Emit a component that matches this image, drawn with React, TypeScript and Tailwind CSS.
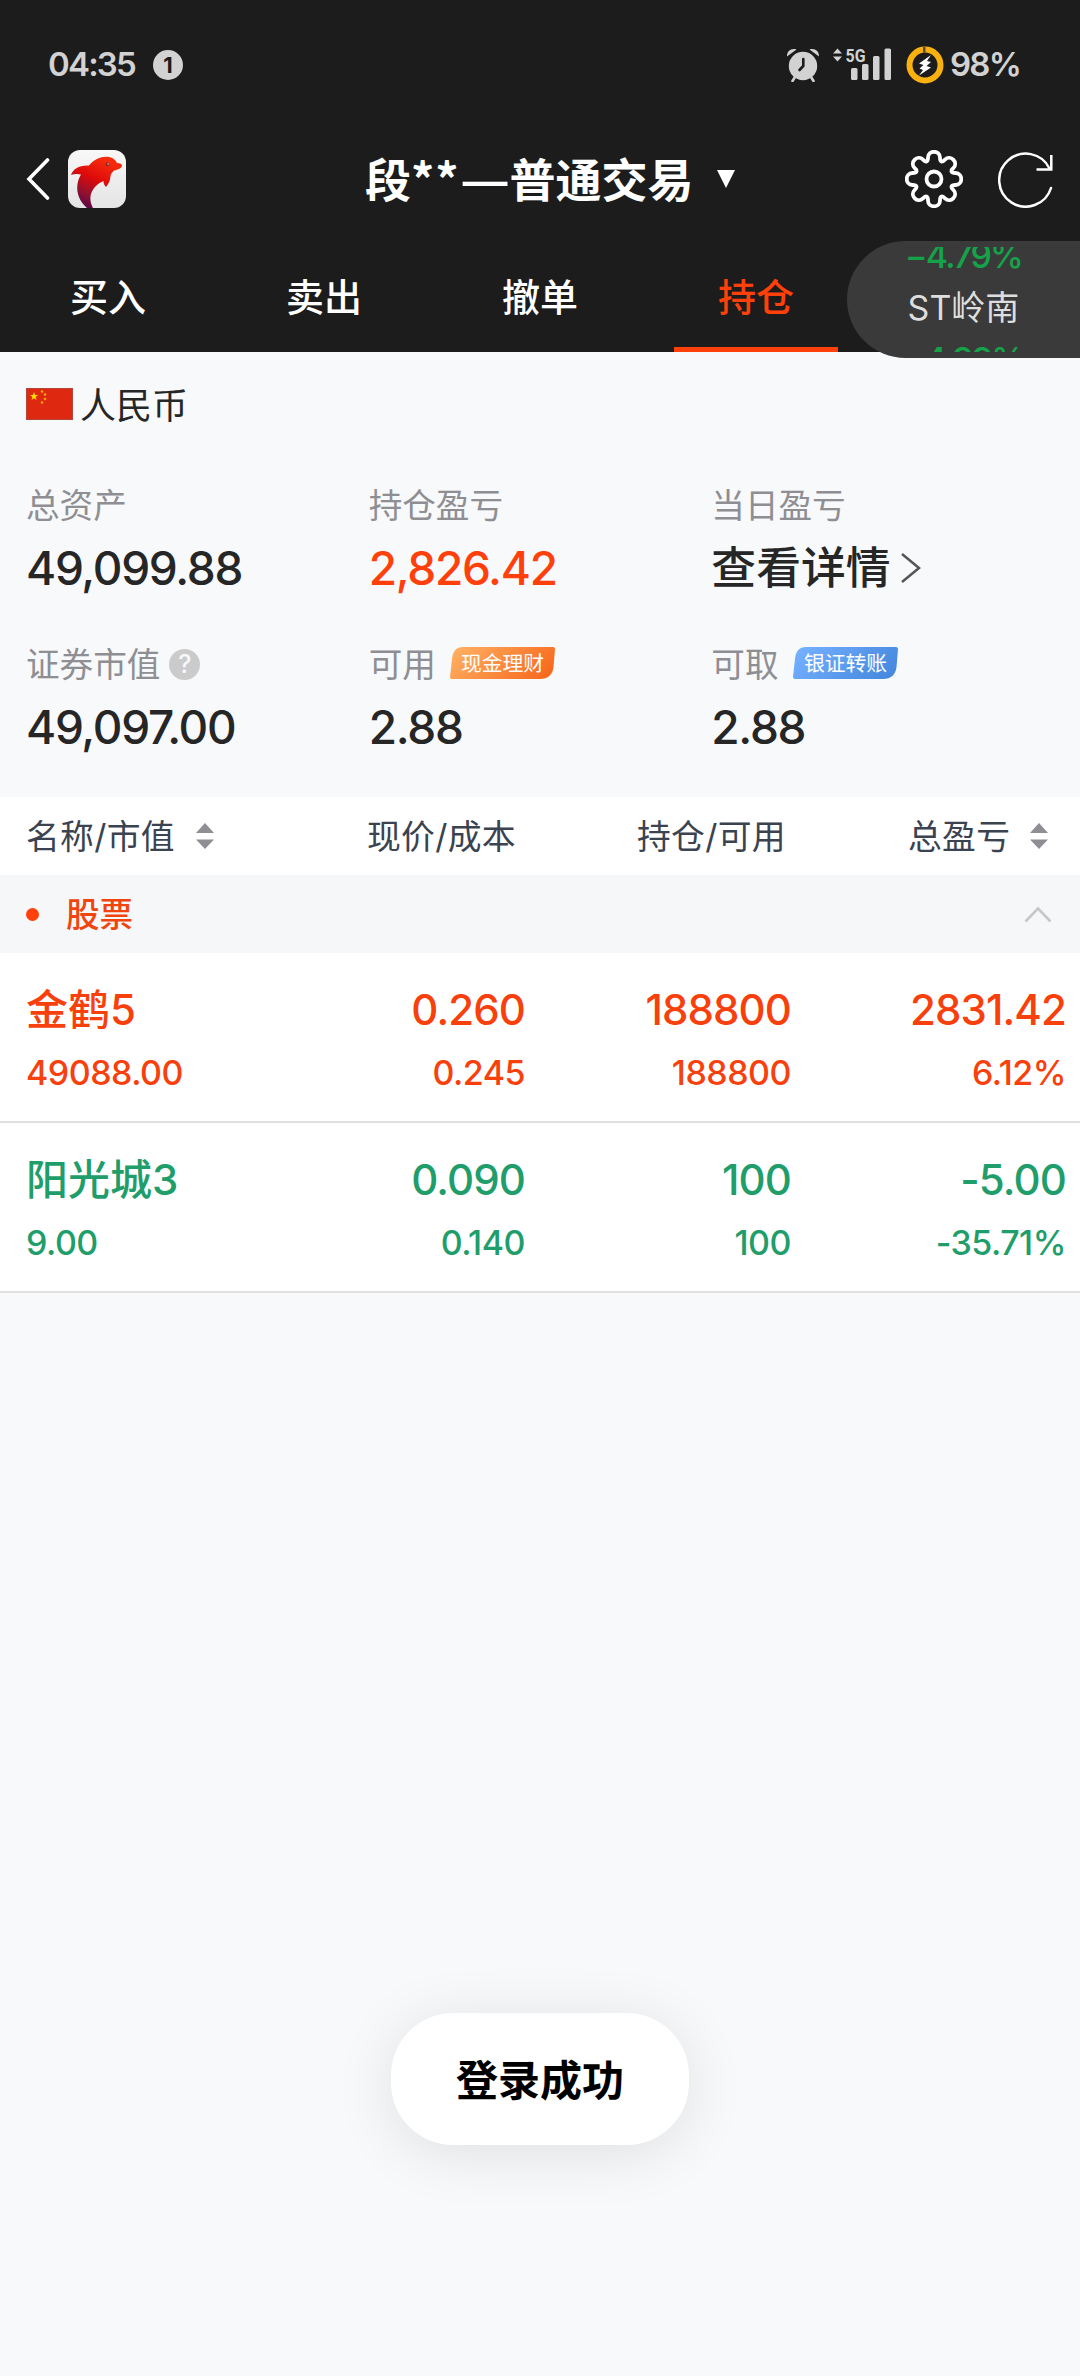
import React, { FC, ReactNode } from 'react';

type Tone = 'up' | 'down';

interface Holding {
    name: string;
    marketValue: string;
    price: string;
    cost: string;
    amount: string;
    available: string;
    profit: string;
    percent: string;
    tone: Tone;
}

const tabs = ['买入', '卖出', '撤单', '持仓'];

const holdings: Holding[] = [
    { name: '金鹤5', marketValue: '49088.00', price: '0.260', cost: '0.245', amount: '188800', available: '188800', profit: '2831.42', percent: '6.12%', tone: 'up' },
    { name: '阳光城3', marketValue: '9.00', price: '0.090', cost: '0.140', amount: '100', available: '100', profit: '-5.00', percent: '-35.71%', tone: 'down' },
];

const AlarmIcon: FC = () => (
    <svg width="32" height="34" viewBox="0 0 32 34" fill="#d2d2d2">
        <circle cx="16" cy="18" r="14.2" />
        <path d="M0 8.500 C0 3 4 0 9.500 1.500 Z M32 8.500 C32 3 28 0 22.500 1.500 Z" />
        <path d="M8 29 L5.500 33 M24 29 L26.500 33" stroke="#d2d2d2" strokeWidth="2.600" strokeLinecap="round" />
        <path d="M16.300 11 V18 L12.500 22" stroke="#1c1c1c" strokeWidth="2.600" strokeLinecap="round" fill="none" />
    </svg>
);

const SignalIcon: FC = () => (
    <svg width="60" height="34" viewBox="0 0 60 34" fill="#d2d2d2">
        <path d="M1 5.500 L5.500 0.500 L10 5.500 Z M1 8.500 L5.500 13.500 L10 8.500 Z" />
        <text x="13.500" y="14" fontSize="18" fontWeight="700" fontFamily="Roboto, sans-serif" textLength="20" lengthAdjust="spacingAndGlyphs">5G</text>
        <rect x="19" y="20" width="6.500" height="12" rx="1.500" />
        <rect x="30" y="16" width="6.500" height="16" rx="1.500" />
        <rect x="41" y="8" width="6.500" height="24" rx="1.500" />
        <rect x="52.500" y="0.500" width="6.500" height="31.500" rx="1.500" />
    </svg>
);

const BatteryIcon: FC = () => (
    <svg width="38" height="38" viewBox="0 0 38 38">
        <circle cx="19" cy="19" r="15.500" fill="none" stroke="#f9b10f" strokeWidth="6" />
        <rect x="17" y="1" width="2.500" height="5.500" fill="#5a4a25" />
        <path d="M25 9 L13 17.500 L17.500 19 L13.500 22.500 L17 24 L13 29.500 L25 21.500 L20.500 20 L25 16 L21 15 Z" fill="#fff" />
    </svg>
);

const DolphinLogo: FC = () => (
    <svg width="58" height="58" viewBox="0 0 58 58">
        <defs>
            <linearGradient id="tile" x1="0" y1="0" x2="0" y2="1">
                <stop offset="0" stopColor="#f8f8f8" />
                <stop offset="1" stopColor="#e4e4e4" />
            </linearGradient>
            <linearGradient id="dolphin" x1="0.7" y1="0.1" x2="0.25" y2="1">
                <stop offset="0" stopColor="#f52a0c" />
                <stop offset="0.4" stopColor="#dd0a0a" />
                <stop offset="0.7" stopColor="#98102c" />
                <stop offset="1" stopColor="#56084c" />
            </linearGradient>
        </defs>
        <rect width="58" height="58" rx="12" fill="url(#tile)" />
        <path d="M3 25 C5 19 11 15 21 15.500 C26 9 34 6 41 7 C46 8 48 11 49 13 C52 13 54 14 54 15.500 C54 18 50 20 46 20.500 C44 22.500 43 24 42.500 26 C42.500 30 40.500 34 38 37 C36 35 35.500 33 35.500 31 C30 33 25 38 23 44 C21.500 49 23 54 25 58 L19 58 C12 52 8 43 9.500 34 C10 30 11.500 27 13 24.500 C9 23.500 6 24 3 25 Z" fill="url(#dolphin)" />
        <circle cx="39.500" cy="14.500" r="1.900" fill="#8f2b22" />
        <circle cx="40.200" cy="14" r="0.800" fill="#e8b0a0" />
    </svg>
);

// eight-lobed gear, alternating outer bumps and inner notches
const GearIcon: FC = () => (
    <svg width="58" height="58" viewBox="-29 -29 58 58" fill="none" stroke="#fff" strokeWidth="3.800" strokeLinejoin="round">
        <path d="M-6 -21.500 C-6 -29.200 6 -29.200 6 -21.500 C6 -17 8.300 -16.200 11 -19.400 C16.500 -24.800 24.800 -16.500 19.400 -11 C16.200 -8.300 17 -6 21.500 -6 C29.200 -6 29.200 6 21.500 6 C17 6 16.200 8.300 19.400 11 C24.800 16.500 16.500 24.800 11 19.400 C8.300 16.200 6 17 6 21.500 C6 29.200 -6 29.200 -6 21.500 C-6 17 -8.300 16.200 -11 19.400 C-16.500 24.800 -24.800 16.500 -19.400 11 C-16.200 8.300 -17 6 -21.500 6 C-29.200 6 -29.200 -6 -21.500 -6 C-17 -6 -16.200 -8.300 -19.400 -11 C-24.800 -16.500 -16.500 -24.800 -11 -19.400 C-8.300 -16.200 -6 -17 -6 -21.500 Z" />
        <circle r="7.500" />
    </svg>
);

const RefreshIcon: FC = () => (
    <svg width="56" height="58" viewBox="0 0 56 58" fill="none" stroke="#fff" strokeWidth="2.500">
        <path d="M53 38 A26.500 26.500 0 1 1 51.500 18.500" strokeLinecap="round" />
        <path d="M53.300 5 V19.500 H38.500" />
    </svg>
);

const FlagIcon: FC = () => (
    <svg width="47" height="32" viewBox="0 0 47 32">
        <rect width="47" height="32" fill="#de2910" />
        <rect x="0.500" y="0.500" width="46" height="31" fill="none" stroke="#b5443a" />
        <path d="M8 4 L9 7 L12 7 L9.600 9 L10.500 12 L8 10.200 L5.500 12 L6.400 9 L4 7 L7 7 Z" fill="#ffde00" />
        <g fill="#f7a410">
            <circle cx="16" cy="3.500" r="1.300" />
            <circle cx="19" cy="6.500" r="1.300" />
            <circle cx="19" cy="11" r="1.300" />
            <circle cx="16" cy="14.500" r="1.300" />
        </g>
    </svg>
);

const SortIcon: FC = () => (
    <svg width="18" height="26" viewBox="0 0 18 26" fill="#8e8e93" className="shrink-0">
        <path d="M9 0 L18 10 H0 Z M9 26 L18 16.500 H0 Z" />
    </svg>
);

const Tag: FC<{ id: string; from: string; to: string; children: ReactNode }> = ({ id, from, to, children }) => (
    <svg width="105" height="32" viewBox="0 0 105 32">
        <defs>
            <linearGradient id={id} x1="0" y1="0.3" x2="1" y2="0.6">
                <stop offset="0" stopColor={from} />
                <stop offset="1" stopColor={to} />
            </linearGradient>
        </defs>
        <path d="M13 0 H103 Q105 0 105 2 L103.500 20 Q102 32 90 32 H2 Q0 32 0 30 L2 12 Q3 0 13 0 Z" fill={`url(#${id})`} />
        <text x="11" y="23.500" fontSize="20.800" fill="#fff" textLength="83" fontFamily="'Noto Sans CJK SC', sans-serif">{children}</text>
    </svg>
);

const Metric: FC<{ label: string; extra?: ReactNode; children: ReactNode }> = ({ label, extra, children }) => (
    <div className="h-[159px]">
        <div className="flex h-[50px] items-center text-[33.600px] leading-[50px] text-[#8e8e93]">
            <span className="pt-[2px]">{label}</span>
            {extra}
        </div>
        <div className="mt-[13px] flex h-[50px] items-center text-[46px] font-medium leading-[50px] tracking-[-1.3px] text-[#262626]">
            {children}
        </div>
    </div>
);

const HoldingRow: FC<{ item: Holding }> = ({ item }) => {
    const color = item.tone === 'up' ? 'text-[#f8400d]' : 'text-[#1f9e6b]';
    const cells = [
        [item.name, item.marketValue],
        [item.price, item.cost],
        [item.amount, item.available],
        [item.profit, item.percent],
    ];
    return (
        <div className={`grid h-[170px] grid-cols-[250px_249px_266px_275px] border-b-2 border-[#e0e0e0] bg-white pl-[26px] font-medium ${color}`}>
            {cells.map(([main, sub], i) => (
                <div key={i} className={i === 0 ? 'text-left' : 'text-right tracking-[-0.9px]'}>
                    <div className="mt-[31px] text-[42px] leading-[52px]">{main}</div>
                    <div className="mt-[17px] text-[34px] leading-[40px] tracking-[-0.5px]">{sub}</div>
                </div>
            ))}
        </div>
    );
};

const App: FC = () => (
    <div className="relative h-[2376px] w-[1080px] overflow-hidden bg-[#f7f9fb] font-['Inter','Noto_Sans_CJK_SC',sans-serif]">
        <header className="flex h-[352px] flex-col bg-[#1c1c1c] text-white">
            <div className="flex h-[130px] items-center pl-[48px] pr-[60px] text-[33px] font-semibold text-[#d2d2d2]">
                <span className="tracking-[-1.8px]">04:35</span>
                <span className="ml-[18px] flex size-[30px] items-center justify-center rounded-full bg-[#d2d2d2] text-[22px] font-bold text-[#1c1c1c]">1</span>
                <span className="ml-auto"><AlarmIcon /></span>
                <span className="ml-[13px]"><SignalIcon /></span>
                <span className="ml-[14px]"><BatteryIcon /></span>
                <span className="ml-[6px] tracking-[-1.8px]">98%</span>
            </div>
            <div className="flex h-[98px] items-center pl-[26px] pr-[26px]">
                <svg width="24" height="44" viewBox="0 0 24 44" fill="none" stroke="#fff" strokeWidth="3.600" strokeLinecap="round">
                    <path d="M21.500 3 L3 22 L21.500 41" />
                </svg>
                <span className="ml-[18px]"><DolphinLogo /></span>
                <h1 className="ml-[239px] flex h-[60px] items-center whitespace-nowrap pb-[4px] font-['Noto_Sans_CJK_SC',sans-serif] text-[46px] font-bold leading-[60px]">
                    段<span className="tracking-[1px]">**</span><span className="origin-left scale-x-[1.2] pr-[8px]">—</span>普通交易
                </h1>
                <svg className="ml-[24px]" width="18" height="18" viewBox="0 0 18 18" fill="#fff"><path d="M0 0 H18 L9 18 Z" /></svg>
                <span className="ml-auto"><GearIcon /></span>
                <span className="ml-[35px]"><RefreshIcon /></span>
            </div>
            <nav className="grid h-[124px] grid-cols-5 text-[38px] font-medium">
                {tabs.map(tab => (
                    <div key={tab} className="flex justify-center">
                        <span className={`flex h-full w-[164px] justify-center border-b-[5px] pt-[41px] leading-[56px] ${tab === '持仓' ? 'border-[#ff400b] text-[#ff400b]' : 'border-transparent'}`}>{tab}</span>
                    </div>
                ))}
            </nav>
        </header>

        <div className="absolute right-0 top-[241px] h-[117px] w-[233px] rounded-l-full bg-[#3a3a3a] py-[6px]">
            <div className="flex h-[105px] flex-col items-center overflow-hidden text-[34px] leading-[52px]">
                <div className="-mt-[17px] shrink-0 font-medium tracking-[-1.8px] text-[#15a34a]">−4.79%</div>
                <div className="shrink-0 text-[#dedede]">ST岭南</div>
                <div className="shrink-0 font-medium tracking-[-1.8px] text-[#15a34a]">−4.99%</div>
            </div>
        </div>

        <section className="h-[445px] px-[26px] pt-[27px]">
            <div className="flex h-[52px] items-center text-[36px] text-[#262626]">
                <span className="-mt-[3px]"><FlagIcon /></span>
                <span className="ml-[7px] pt-[2px]">人民币</span>
            </div>
            <div className="mt-[49px] grid grid-cols-3">
                <Metric label="总资产">49,099.88</Metric>
                <Metric label="持仓盈亏"><span className="text-[#ff400b]">2,826.42</span></Metric>
                <Metric label="当日盈亏">
                    <span className="text-[44.800px] tracking-normal">查看详情</span>
                    <svg className="ml-[9px]" width="22" height="32" viewBox="0 0 22 32" fill="none" stroke="#555" strokeWidth="2.500"><path d="M2 2 L19 16 L2 30" /></svg>
                </Metric>
                <Metric
                    label="证券市值"
                    extra={<span className="ml-[9px] flex size-[31px] items-center justify-center rounded-full bg-[#cbcbcb] text-[25px] font-medium text-[#f7f9fb]">?</span>}
                >
                    49,097.00
                </Metric>
                <Metric label="可用" extra={<span className="ml-[14px] -mt-[2px]"><Tag id="cash" from="#ffae60" to="#f76a1e">现金理财</Tag></span>}>2.88</Metric>
                <Metric label="可取" extra={<span className="ml-[14px] -mt-[2px]"><Tag id="bank" from="#74afff" to="#4689de">银证转账</Tag></span>}>2.88</Metric>
            </div>
        </section>

        <main>
            <div className="grid h-[78px] grid-cols-[341px_270px_271px_1fr] items-center bg-white pl-[26px] text-[33.800px] tracking-[0.3px] text-[#3b4350]">
                <div className="flex items-center gap-[21px]"><span className="pt-[2px]">名称/市值</span><SortIcon /></div>
                <div className="pt-[2px]">现价/成本</div>
                <div className="pt-[2px]">持仓/可用</div>
                <div className="flex items-center gap-[20px]"><span className="pt-[2px]">总盈亏</span><SortIcon /></div>
            </div>
            <div className="flex h-[78px] items-center bg-[#f6f7f9] pl-[26px] pr-[28px] text-[33.600px] font-medium text-[#f0450f]">
                <span className="size-[13px] rounded-full bg-[#ff400b]" />
                <span className="ml-[27px] pt-[2px]">股票</span>
                <svg className="ml-auto" width="28" height="17" viewBox="0 0 28 17" fill="none" stroke="#c8c8c8" strokeWidth="2.600"><path d="M1.500 15.500 L14 2.500 L26.500 15.500" /></svg>
            </div>
            {holdings.map(item => <HoldingRow key={item.name} item={item} />)}
        </main>

        <div className="absolute left-[391px] top-[2013px] flex h-[132px] w-[298px] items-center justify-center rounded-[62px] bg-white pt-[3px] text-[42px] font-bold text-black shadow-[0_8px_60px_rgba(0,0,0,0.10)]">
            登录成功
        </div>
    </div>
);

export default App;
